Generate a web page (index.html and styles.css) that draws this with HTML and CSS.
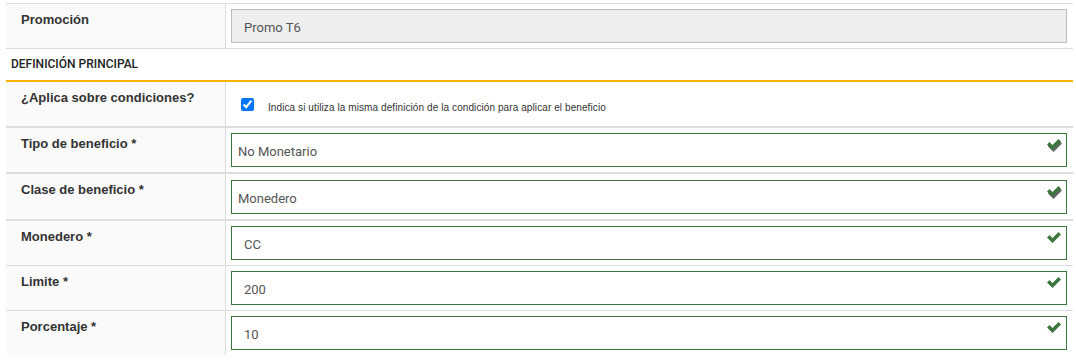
FILE: index.html
```html
<!DOCTYPE html>
<html lang="es">
<head>
    <meta charset="UTF-8">
    <meta name="viewport" content="width=device-width, initial-scale=1.0">
    <title>Definición de promoción</title>
    <link rel="stylesheet" href="styles.css">
</head>
<body>
    <div class="form-table">
        <div class="row">
            <div class="label">Promoción</div>
            <div class="field">
                <div class="input disabled">Promo T6</div>
            </div>
        </div>

        <div class="section-title">DEFINICIÓN PRINCIPAL</div>

        <div class="row thick">
            <div class="label">¿Aplica sobre condiciones?</div>
            <div class="field check-field">
                <input type="checkbox" checked>
                <span class="hint">Indica si utiliza la misma definición de la condición para aplicar el beneficio</span>
            </div>
        </div>

        <div class="row thick">
            <div class="label">Tipo de beneficio *</div>
            <div class="field">
                <div class="input success select">No Monetario
                    <svg class="ok shadowed" viewBox="0 0 15 11"><path class="back" d="M0 5.5 L2.5 3 L5.5 6 L11.5 0 L14 2.5 L5.5 11 Z"/><path d="M0 5.5 L2.5 3 L5.5 6 L11.5 0 L14 2.5 L5.5 11 Z"/></svg>
                </div>
            </div>
        </div>

        <div class="row thick tall">
            <div class="label">Clase de beneficio *</div>
            <div class="field">
                <div class="input success select">Monedero
                    <svg class="ok shadowed" viewBox="0 0 15 11"><path class="back" d="M0 5.5 L2.5 3 L5.5 6 L11.5 0 L14 2.5 L5.5 11 Z"/><path d="M0 5.5 L2.5 3 L5.5 6 L11.5 0 L14 2.5 L5.5 11 Z"/></svg>
                </div>
            </div>
        </div>

        <div class="row">
            <div class="label">Monedero *</div>
            <div class="field">
                <div class="input success">CC
                    <svg class="ok" viewBox="0 0 15 11"><path d="M0 5.5 L2.5 3 L5.5 6 L11.5 0 L14 2.5 L5.5 11 Z"/></svg>
                </div>
            </div>
        </div>

        <div class="row">
            <div class="label">Limite *</div>
            <div class="field">
                <div class="input success">200
                    <svg class="ok" viewBox="0 0 15 11"><path d="M0 5.5 L2.5 3 L5.5 6 L11.5 0 L14 2.5 L5.5 11 Z"/></svg>
                </div>
            </div>
        </div>

        <div class="row last">
            <div class="label">Porcentaje *</div>
            <div class="field">
                <div class="input success">10
                    <svg class="ok" viewBox="0 0 15 11"><path d="M0 5.5 L2.5 3 L5.5 6 L11.5 0 L14 2.5 L5.5 11 Z"/></svg>
                </div>
            </div>
        </div>
    </div>
</body>
</html>
```

FILE: styles.css
```css
body {
    margin: 0;
    padding: 3px 3px 0 6px;
    background: #fff;
    font-family: Roboto, "Liberation Sans", Arial, sans-serif;
    color: #333;
}

.form-table {
    border-top: 1px solid #ddd;
}

.row {
    display: flex;
    border-bottom: 1px solid #ddd;
}

.row.thick {
    border-bottom: 2px solid #ddd;
}

.row.last {
    border-bottom: none;
}

.label {
    width: 220px;
    flex-shrink: 0;
    box-sizing: border-box;
    padding: 7px 15px 6px;
    background-color: #fafafa;
    border-right: 1px solid #ddd;
    font-family: "Liberation Sans", Arial, sans-serif;
    font-weight: bold;
    font-size: 13px;
    line-height: 18px;
    color: #333;
}

.field {
    flex: 1;
    padding: 5px 6px 5px 5px;
}

.row.tall .field {
    padding-top: 6px;
}

.input {
    position: relative;
    height: 34px;
    box-sizing: border-box;
    padding: 0 12px;
    border: 1px solid #ccc;
    font-size: 13px;
    line-height: 32px;
    color: #555;
    background: #fff;
}

.input.disabled {
    background-color: #eee;
    border-color: #bbb;
    padding-top: 2px;
}

.input.success {
    border-color: #3c763d;
    padding-top: 2px;
}

.input.select {
    padding-left: 6px;
}

.ok {
    position: absolute;
    right: 4px;
    top: 5px;
    width: 15px;
    height: 11px;
    overflow: visible;
    fill: #3c763d;
}

.ok .back {
    fill: #666;
    transform: translate(1px, 2px);
}

.section-title {
    padding: 0 5px;
    height: 31px;
    line-height: 31px;
    font-size: 12px;
    font-weight: 500;
    color: #222;
    border-bottom: 2px solid #f8b500;
}

.check-field {
    display: flex;
    align-items: flex-start;
    height: 44px;
    box-sizing: border-box;
    padding: 16px 10px 0 15px;
}

.check-field input {
    width: 13px;
    height: 13px;
    margin: 0 14px 0 0;
}

.hint {
    font-family: "Liberation Sans", Arial, sans-serif;
    font-size: 10px;
    letter-spacing: 0.09px;
    color: #333;
    margin-top: 4px;
}
```
